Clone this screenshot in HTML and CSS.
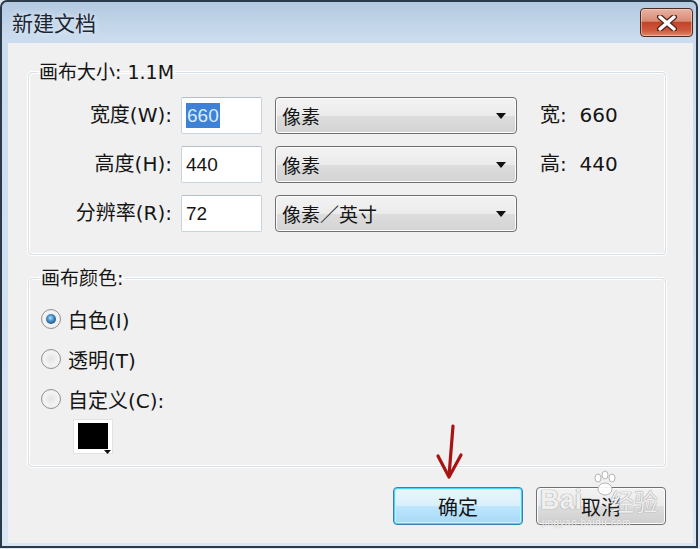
FILE: index.html
```html
<!DOCTYPE html>
<html lang="zh-CN">
<head>
<meta charset="utf-8">
<title>新建文档</title>
<link rel="stylesheet" href="styles.css">
</head>
<body>
<div class="window">
  <div class="titlebar">
    <span class="title">新建文档</span>
    <div class="close">
      <svg width="26" height="16" viewBox="0 0 26 16"><path d="M6 2 L20 14 M20 2 L6 14" stroke="#5a2418" stroke-width="6" stroke-linecap="round"/><path d="M6 2 L20 14 M20 2 L6 14" stroke="#ffffff" stroke-width="3.4" stroke-linecap="round"/></svg>
    </div>
  </div>
  <div class="client">
    <fieldset class="group group-size">
      <legend class="legend">画布大小: 1.1M</legend>
      <div class="rows">
        <label class="lbl">宽度(W):</label>
        <div class="input"><span class="sel">660</span></div>
        <div class="select"><span>像素</span><svg class="caret" width="10" height="6" viewBox="0 0 10 6"><path d="M0 0H10L5 6Z" fill="#111"/></svg></div>
        <div class="info">宽:&nbsp;&nbsp;660</div>

        <label class="lbl">高度(H):</label>
        <div class="input"><span>440</span></div>
        <div class="select"><span>像素</span><svg class="caret" width="10" height="6" viewBox="0 0 10 6"><path d="M0 0H10L5 6Z" fill="#111"/></svg></div>
        <div class="info">高:&nbsp;&nbsp;440</div>

        <label class="lbl">分辨率(R):</label>
        <div class="input"><span>72</span></div>
        <div class="select"><span>像素／英寸</span><svg class="caret" width="10" height="6" viewBox="0 0 10 6"><path d="M0 0H10L5 6Z" fill="#111"/></svg></div>
        <div class="info"></div>
      </div>
    </fieldset>

    <fieldset class="group group-color">
      <legend class="legend">画布颜色:</legend>
      <div class="radio-row"><span class="radio checked"></span><span>白色(I)</span></div>
      <div class="radio-row"><span class="radio"></span><span>透明(T)</span></div>
      <div class="radio-row"><span class="radio"></span><span>自定义(C):</span></div>
      <div class="swatch"><span class="swatch-fill"></span><svg class="swatch-caret" width="7" height="4" viewBox="0 0 7 4"><path d="M0 0H7L3.5 4Z" fill="#111"/></svg></div>
    </fieldset>

    <div class="buttons">
      <div class="btn btn-default">确定</div>
      <div class="btn">取消</div>
    </div>
  </div>

  <svg class="arrow" width="40" height="60" viewBox="0 0 40 60">
    <path d="M23 2 L19 52" stroke="#a81414" stroke-width="3.2" stroke-linecap="round"/>
    <path d="M8 32 L19 53 L31 31" stroke="#a81414" stroke-width="3.2" fill="none" stroke-linecap="round" stroke-linejoin="round"/>
  </svg>

  <div class="watermark">
    <svg class="paw" width="30" height="30" viewBox="0 0 30 30">
      <g fill="rgba(255,255,255,0.9)" stroke="#b5b5b5" stroke-width="1">
        <ellipse cx="8" cy="9" rx="3" ry="4"/>
        <ellipse cx="15" cy="6" rx="3" ry="4"/>
        <ellipse cx="22" cy="9" rx="3" ry="4"/>
        <ellipse cx="15" cy="20" rx="7" ry="6"/>
      </g>
    </svg>
    <span class="wm-bai">Bai</span><span class="wm-jy">经验</span>
    <span class="wm-url">jingyan.baidu.com</span>
  </div>
</div>
</body>
</html>
```

FILE: styles.css
```css
html, body {
  margin: 0;
  padding: 0;
  width: 700px;
  height: 549px;
  overflow: hidden;
  background: #dbe6f1;
}

.window {
  position: relative;
  box-sizing: border-box;
  width: 698px;
  height: 548px;
  border: 2px solid #2a3a4a;
  border-radius: 7px 7px 0 0;
  background: linear-gradient(#b3c9e0, #cbdcee 38px, #d9e6f3);
  display: flex;
  flex-direction: column;
  font-family: "DejaVu Sans", "Noto Sans CJK SC", sans-serif;
  color: #151515;
}

.titlebar {
  height: 41px;
  display: flex;
  justify-content: space-between;
  align-items: flex-start;
  padding: 0 3px 0 10px;
}

.title {
  font-family: "Noto Sans CJK SC", sans-serif;
  font-size: 21px;
  line-height: 21px;
  margin-top: 10px;
  color: #1b2633;
  text-shadow: 0 0 6px rgba(255,255,255,0.8);
}

.close {
  margin-top: 6px;
  width: 53px;
  height: 29px;
  box-sizing: border-box;
  border: 1px solid #4d2a22;
  border-radius: 4px;
  background: linear-gradient(#e8b3a3, #d98b74 45%, #c2442a 50%, #cf5a3d 80%, #e08a6b);
  box-shadow: inset 0 0 0 1px rgba(255,220,210,0.5);
  display: flex;
  align-items: center;
  justify-content: center;
}

.client {
  flex: 1;
  margin: 0 3px 3px 6px;
  background: #f0f0f0;
  padding: 19px 27px 18px 20px;
  display: flex;
  flex-direction: column;
}

.group {
  margin: 0;
  border: 1px solid #d5dfe5;
  border-radius: 4px;
  box-shadow: inset 0 0 0 1px #ffffff, 0 0 0 1px #ffffff;
  padding: 0 0 0 10px;
}

.legend {
  font-size: 19px;
  line-height: 20px;
  padding: 0 2px;
}

.group-size {
  padding: 14px 0 22px 0;
  margin-bottom: 13px;
}

.group-size .legend {
  margin-left: 8px;
}

.rows {
  display: grid;
  grid-template-columns: 132px 81px 255px 1fr;
  column-gap: 0;
  row-gap: 12px;
  margin-left: 20px;
  margin-top: 1px;
}

.lbl {
  font-size: 20px;
  line-height: 37px;
  text-align: right;
  padding-right: 9px;
  white-space: nowrap;
}

.input {
  box-sizing: border-box;
  height: 37px;
  width: 81px;
  background: #fff;
  border: 1px solid #c9d3dd;
  border-top-color: #b5bfc9;
  border-radius: 2px;
  font-family: "Liberation Sans", "DejaVu Sans", sans-serif;
  font-size: 19px;
  line-height: 35px;
  padding-left: 4px;
}

.sel {
  background: #3d82d6;
  color: #dcecff;
  display: inline-block;
  line-height: 25px;
  padding: 0 1px;
}

.select {
  box-sizing: border-box;
  height: 37px;
  width: 242px;
  margin-left: 13px;
  border: 1px solid #707070;
  border-radius: 4px;
  background: linear-gradient(#f3f3f3, #ebebeb 50%, #dddddd 51%, #d3d3d3);
  box-shadow: inset 0 0 0 1px #fcfcfc;
  display: flex;
  align-items: center;
  justify-content: space-between;
  padding: 0 10px 0 6px;
  font-family: "Noto Sans CJK SC", sans-serif;
  font-size: 19px;
  line-height: 20px;
}

.caret {
  margin-top: 1px;
}

.info {
  font-size: 20px;
  line-height: 37px;
  padding-left: 23px;
  white-space: nowrap;
}

.group-color {
  flex: 1;
  padding: 11px 0 9px 12px;
  margin-bottom: 20px;
}

.group-color .legend {
  margin-left: -2px;
}

.radio-row {
  display: flex;
  align-items: center;
  gap: 7px;
  height: 40px;
  font-size: 20px;
}

.radio {
  box-sizing: border-box;
  width: 20px;
  height: 20px;
  border-radius: 50%;
  border: 1px solid #8f9193;
  background: radial-gradient(circle at 50% 50%, #e3e3e3 0, #f4f4f4 55%, #d8d8d8 100%);
  box-shadow: inset 0 0 0 2px #f2f2f2;
  display: flex;
  align-items: center;
  justify-content: center;
}

.radio.checked::after {
  content: "";
  width: 10px;
  height: 10px;
  border-radius: 50%;
  background: radial-gradient(circle at 45% 40%, #b8e2fb 0, #4a97d0 35%, #15466f 85%);
}

.swatch {
  position: relative;
  box-sizing: border-box;
  width: 40px;
  height: 35px;
  margin: 0 0 0 32px;
  background: #fff;
  border: 1px solid #e2e2e2;
  padding: 3px 4px 4px 4px;
}

.swatch-fill {
  display: block;
  width: 100%;
  height: 100%;
  background: #000;
}

.swatch-caret {
  position: absolute;
  right: 1px;
  bottom: -1px;
}

.buttons {
  display: flex;
  justify-content: flex-end;
  gap: 13px;
}

.btn {
  box-sizing: border-box;
  width: 130px;
  height: 38px;
  border: 1px solid #707070;
  border-radius: 4px;
  background: linear-gradient(#f3f3f3, #ebebeb 50%, #dddddd 51%, #cfcfcf);
  box-shadow: inset 0 0 0 1px #fcfcfc;
  display: flex;
  align-items: center;
  justify-content: center;
  font-family: "Noto Sans CJK SC", sans-serif;
  font-size: 20px;
}

.btn-default {
  border-color: #3c7fb1;
  background: linear-gradient(#eaf6fd, #d9f0fc 50%, #bee6fd 51%, #a7d9f5);
  box-shadow: inset 0 0 0 1px #48d4f8, inset 0 0 0 2px #c8f0ff;
}

.arrow {
  position: absolute;
  left: 428px;
  top: 422px;
}

.watermark {
  position: absolute;
  left: 536px;
  top: 465px;
  width: 130px;
  height: 65px;
  pointer-events: none;
}

.paw {
  position: absolute;
  left: 52px;
  top: 2px;
}

.wm-bai {
  position: absolute;
  left: 2px;
  top: 18px;
  font-family: "Liberation Sans", sans-serif;
  font-size: 27px;
  font-weight: bold;
  color: rgba(255,255,255,0.85);
  text-shadow: 0 0 1px #999, 0 0 1px #999;
}

.wm-jy {
  position: absolute;
  left: 72px;
  top: 20px;
  font-family: "Noto Sans CJK SC", sans-serif;
  font-size: 24px;
  line-height: 28px;
  color: rgba(255,255,255,0.85);
  text-shadow: 0 0 1px #999, 0 0 1px #999;
}

.wm-url {
  position: absolute;
  left: 4px;
  top: 50px;
  font-family: "Liberation Sans", sans-serif;
  font-size: 10px;
  letter-spacing: 0.5px;
  color: rgba(255,255,255,0.8);
  text-shadow: 0 0 1px #aaa;
}
```
